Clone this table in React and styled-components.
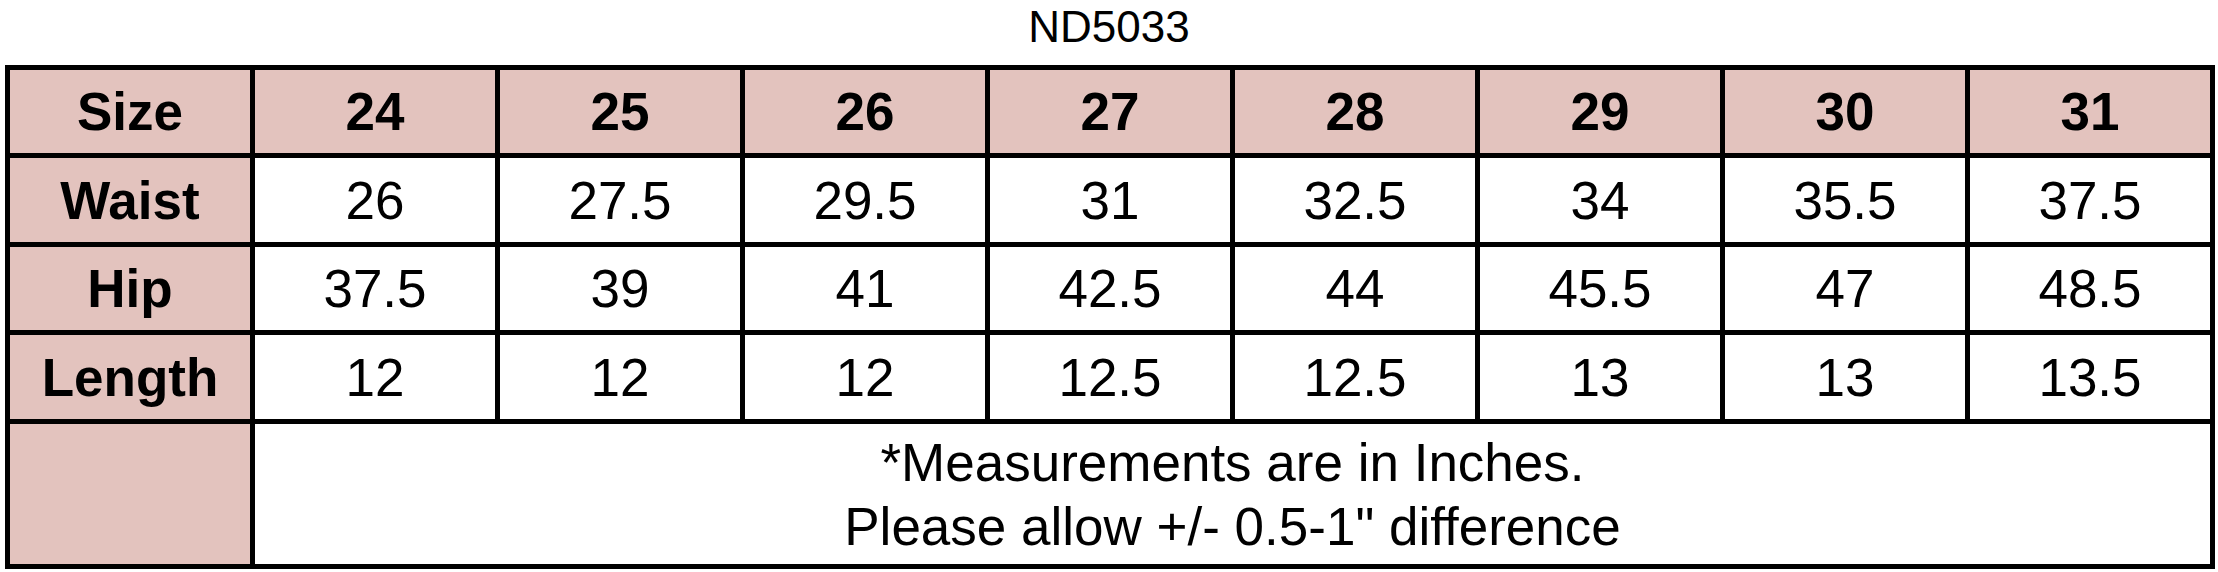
import React from 'react';
import styled, { createGlobalStyle } from 'styled-components';

const GlobalStyle = createGlobalStyle`
  html, body {
    margin: 0;
    padding: 0;
    background: #fff;
  }
  body {
    font-family: "Liberation Sans", Arial, Helvetica, sans-serif;
    color: #000;
  }
`;

const Page = styled.div`
  width: 2218px;
  height: 572px;
  overflow: hidden;
`;

const Title = styled.div`
  padding-top: 2px;
  height: 50px;
  margin-bottom: 13px;
  font-size: 44px;
  line-height: 50px;
  text-align: center;
`;

const Grid = styled.div`
  margin-left: 5px;
  width: max-content;
  display: grid;
  grid-template-columns: repeat(9, 240px);
  grid-template-rows: 83px 84px 83px 84px 140px;
  gap: 5px;
  padding: 5px;
  background: #000;
`;

const Cell = styled.div`
  display: flex;
  align-items: center;
  justify-content: center;
  background: ${(p) => (p.$head ? '#e3c3be' : '#fff')};
  font-size: 53px;
  font-weight: ${(p) => (p.$bold ? 700 : 400)};
  line-height: 1;
  white-space: nowrap;
`;

const Note = styled.div`
  grid-column: span 8;
  display: flex;
  flex-direction: column;
  align-items: center;
  justify-content: center;
  padding-top: 2px;
  background: #fff;
  font-size: 53px;
  line-height: 64px;
`;

const sizes = ['24', '25', '26', '27', '28', '29', '30', '31'];
const rows = [
  { label: 'Waist', values: ['26', '27.5', '29.5', '31', '32.5', '34', '35.5', '37.5'] },
  { label: 'Hip', values: ['37.5', '39', '41', '42.5', '44', '45.5', '47', '48.5'] },
  { label: 'Length', values: ['12', '12', '12', '12.5', '12.5', '13', '13', '13.5'] },
];

export default function App() {
  return (
    <Page>
      <GlobalStyle />
      <Title>ND5033</Title>
      <Grid>
        <Cell $head $bold>Size</Cell>
        {sizes.map((s) => (
          <Cell key={s} $head $bold>{s}</Cell>
        ))}
        {rows.map((row) => (
          <React.Fragment key={row.label}>
            <Cell $head $bold>{row.label}</Cell>
            {row.values.map((v, i) => (
              <Cell key={i}>{v}</Cell>
            ))}
          </React.Fragment>
        ))}
        <Cell $head />
        <Note>
          <span>*Measurements are in Inches.</span>
          <span>Please allow +/- 0.5-1" difference</span>
        </Note>
      </Grid>
    </Page>
  );
}
